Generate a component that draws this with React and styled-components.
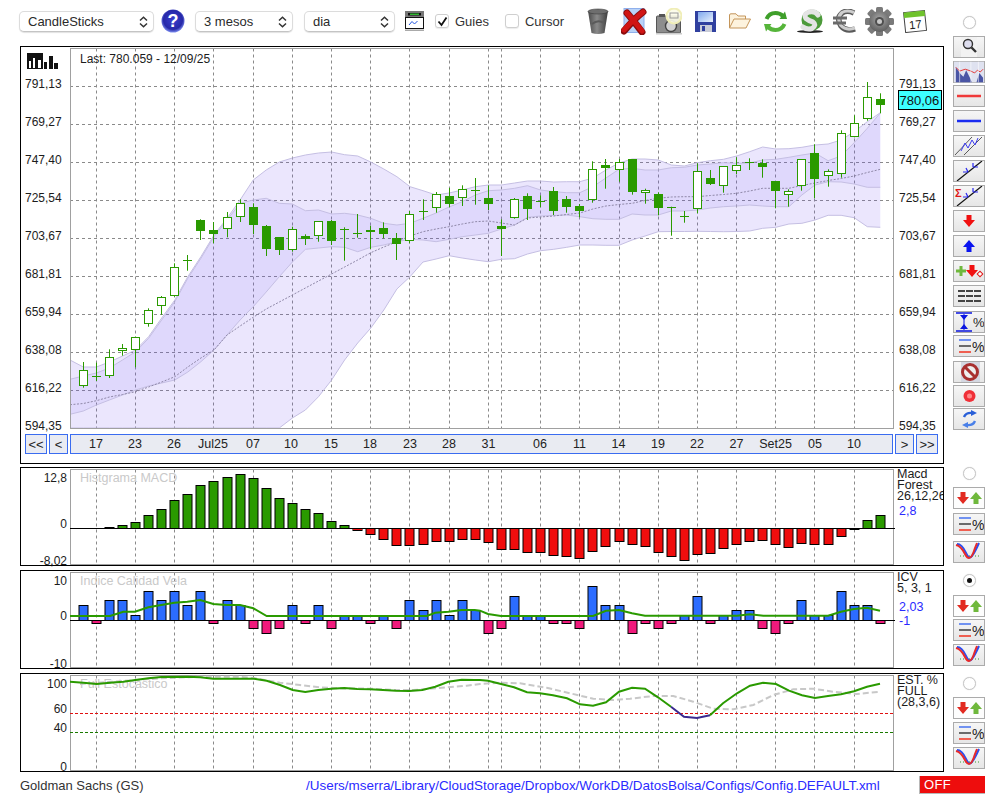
import React from "react";
import styled, { createGlobalStyle } from "styled-components";

const GlobalStyle = createGlobalStyle`
  html, body { margin: 0; padding: 0; background: #fff; }
  body { font-family: "Liberation Sans", Arial, sans-serif; color: #222; }
`;

// candles: [wickTop, wickBottom, bodyTop, bodyBottom, hollow]
const candles = [
  [362, 387.7, 370.3, 385.7, 1], [362.7, 381, 376.7, 376.7, 0], [349.3, 378, 357.3, 375.7, 1], [344, 355.7, 348.3, 350.7, 1],
  [336.7, 367.3, 337.3, 349.7, 1], [308.3, 326.7, 310.3, 323.7, 1], [296, 314.7, 297.3, 305.7, 1], [263.3, 296.7, 267.3, 295.7, 1],
  [255, 270.7, 260.3, 260.3, 0], [219.3, 240, 220.3, 230.7, 0], [222, 243.3, 230, 232.7, 0], [212, 237.3, 217.3, 228.3, 1],
  [199.3, 222, 203.3, 216.3, 1], [203.3, 234, 207.3, 224.7, 0], [225, 256, 226.3, 248.7, 0], [237.3, 255, 237.3, 249.7, 0],
  [226.7, 251.7, 229.3, 249.3, 1], [234.3, 245, 236, 237.7, 0], [221.3, 241.7, 221.7, 235.3, 1], [220, 245, 221, 239.7, 0],
  [227.3, 260.7, 229.3, 229.3, 0], [214, 237.7, 233.3, 233.3, 0], [225.7, 249, 230.3, 231.7, 0], [222.3, 238.3, 228.3, 233.7, 0],
  [233, 260, 238.3, 243.7, 0], [211, 243.3, 214.3, 240.3, 1], [199.3, 220, 211.3, 211.3, 0], [192, 212.7, 194.3, 207.3, 1],
  [188, 207.3, 196, 202.7, 0], [185.3, 206, 189.3, 197.3, 1], [178, 204.7, 190.7, 190.7, 0], [185.3, 210, 198, 202.7, 0],
  [219.3, 256, 226, 227.7, 0], [198, 218.7, 199.3, 217.7, 1], [193.3, 220, 196, 207.7, 0], [195.3, 207.3, 201.3, 201.3, 0],
  [187, 215, 191, 210, 0], [196, 212.7, 199.3, 206.7, 0], [204, 217.3, 206.3, 210.7, 0], [161.3, 202.7, 169.7, 199.3, 1],
  [159, 188.7, 165, 166.7, 0], [159, 181.7, 162.3, 169.3, 1], [159, 194.7, 159, 190.7, 0], [188.7, 203.7, 190.3, 192.3, 1],
  [192.3, 215.3, 194.3, 207, 0], [206.7, 235.7, 207, 207, 0], [211, 222.7, 216.3, 216.3, 0], [163.3, 213.3, 171.3, 208.3, 1],
  [170, 185, 178.3, 183.7, 0], [166.3, 192.7, 166.3, 185.3, 1], [157.3, 174, 165.3, 170.3, 1], [158.3, 170, 162.3, 162.3, 0],
  [159.3, 177.7, 163, 165.7, 0], [181.3, 208.3, 181.3, 190.7, 0], [189.3, 206.7, 191.3, 194.3, 1], [159, 190.7, 159.3, 185.3, 1],
  [144.3, 198.3, 153, 177.7, 0], [169.3, 186.7, 171.3, 175.3, 1], [130.3, 177.7, 133.3, 173.7, 1], [115.3, 137.3, 123.3, 136.3, 1],
  [82, 120.7, 97.3, 118.3, 1], [93.3, 113.3, 99.3, 104.7, 0],
];

const outerUpper = [367, 367, 362, 356, 350, 336.7, 318, 300, 276.7, 256.7, 235, 218.3, 200, 180, 170, 162, 158, 155, 153, 152, 154.7, 156, 162, 169, 176.7, 186.7, 190.7, 195, 193, 190, 186.7, 185, 185, 183, 181, 181, 182, 181.7, 181.7, 178, 170, 163, 159, 159, 160, 165, 166, 162.7, 160.7, 159.3, 156, 151.7, 147, 149, 148.7, 147.3, 145, 144, 140, 131.7, 121.7, 112.7];
const innerUpper = [376, 373, 368, 360, 351.7, 338.3, 320, 301.7, 278.3, 258.3, 236.7, 220, 203.3, 200, 198.3, 203.3, 204, 210.7, 210, 214, 213.3, 215, 218.3, 223.3, 225, 223.3, 218.3, 213, 207, 201.7, 195, 190.7, 190, 188.3, 185.7, 190, 191.7, 192.7, 192.7, 186.7, 178, 169.3, 168.3, 170, 170, 167.7, 167.3, 165, 164, 162.7, 163.3, 163, 160, 159.3, 157.3, 155, 153, 160.7, 156, 142.7, 128.3, 113];
const innerLower = [411, 405, 400, 395, 390, 386, 383, 380, 372, 361.7, 350, 335, 320, 306.7, 292, 276.7, 262, 249.3, 248, 246.7, 247.3, 251.7, 247.3, 245, 241.7, 239.3, 240, 241.7, 239.3, 236.7, 235, 233.3, 229, 225, 217.3, 216, 215.5, 215, 216.7, 218.7, 219.3, 219.3, 214, 215, 215, 211, 211, 210, 208, 206.7, 206, 205, 206, 206.7, 206.7, 195, 185, 181.7, 182, 184, 187.3, 187.3];
const outerLower = [428, 428, 428, 428, 428, 428, 428, 428, 428, 428, 428, 428, 428, 428, 428, 428, 418, 410, 396.7, 380, 360, 343, 328, 310, 289, 276.7, 262, 259, 255.7, 258, 260, 261.7, 259.3, 258.7, 254, 250.7, 249.3, 247.3, 245, 245, 245.3, 245.3, 240, 236, 231.7, 231.5, 231.5, 231.3, 231.5, 231.7, 231.5, 231, 228.3, 227.3, 224, 223.3, 220, 215.3, 215.3, 217.7, 226.7, 227.3];
const movingAvg = [403.5, 400.7, 397, 394.5, 391.7, 387, 382, 376.7, 367, 358, 350, 335, 326, 317.3, 309, 302, 295, 288, 281, 274, 267, 260, 252.7, 247, 241.7, 236, 231.7, 229, 226.7, 224, 221.7, 221, 223, 225, 218, 217, 216, 214.5, 213, 209, 206, 204.5, 203.3, 200.5, 198.3, 197, 196.7, 196.7, 195.5, 194.5, 193.3, 191, 188.3, 188.3, 188.3, 185.5, 183, 180.5, 178.5, 176, 172.5, 169.3];

// macd bar ends and icv bar ends, read at 3x from the reference
const macdEnds = [205, 205, 202, 196, 187, 166, 148, 121, 103, 76, 64, 52, 43, 55, 85, 115, 130, 148, 160, 184, 196, 212, 223, 238, 257, 257, 254, 245, 245, 238, 238, 247, 269, 269, 277, 277, 286, 290, 296, 274, 260, 245, 254, 260, 277, 290, 301, 283, 281, 265, 254, 245, 241, 254, 263, 251, 254, 254, 230, 207, 181, 166];
const icvEnds = [437, 490, 421, 421, 466, 394, 421, 394, 437, 394, 490, 421, 436, 505, 521, 505, 436, 490, 436, 505, 466, 466, 490, 466, 505, 421, 451, 421, 466, 421, 451, 521, 505, 409, 466, 466, 490, 490, 505, 379, 436, 436, 521, 490, 505, 490, 466, 409, 490, 466, 451, 451, 505, 521, 490, 421, 466, 466, 394, 436, 436, 490];

const traced = (left, right) => [
  ...left.map(([x, y]) => [x / 3, 460 + y / 3]),
  ...right.map(([x, y]) => [480 + x / 3, 460 + y / 3]),
];

const icvLine = traced(
  [[210, 468], [330, 468], [370, 455], [405, 455], [445, 442], [484, 435], [523, 428], [562, 425], [601, 420], [640, 432], [679, 435], [720, 435], [760, 445], [800, 468], [1280, 468], [1306, 458], [1345, 455], [1385, 450], [1424, 450]],
  [[0, 452], [24, 462], [63, 468], [339, 468], [378, 452], [417, 450], [456, 460], [495, 467], [771, 467], [810, 463], [850, 467], [1044, 467], [1083, 455], [1122, 447], [1161, 443], [1200, 452]]
);
const estGreen = traced(
  [[210, 665], [250, 668], [290, 672], [330, 668], [370, 665], [406, 660], [445, 655], [484, 651], [562, 650], [601, 652], [640, 656], [760, 656], [800, 662], [840, 675], [878, 690], [916, 696], [955, 690], [994, 686], [1033, 684], [1072, 687], [1110, 688], [1149, 690], [1188, 692], [1228, 693], [1267, 690], [1306, 680], [1345, 665], [1385, 659], [1424, 660]],
  [[0, 660], [24, 662], [63, 672], [102, 682], [141, 697], [180, 700], [219, 706], [261, 715], [300, 733], [339, 737], [378, 727], [417, 695], [456, 683], [495, 686], [534, 712], [573, 740]]
);
const estGreenEnd = traced([], [[690, 766], [729, 730], [771, 700], [810, 677], [849, 668], [888, 672], [927, 692], [966, 706], [1005, 714], [1044, 708], [1083, 703], [1122, 694], [1161, 680], [1200, 671]]);
const estPurple = traced([], [[573, 740], [612, 770], [651, 774], [690, 766]]);
const estGray = traced(
  [[240, 672], [480, 655], [560, 652], [600, 650], [720, 650], [760, 654], [840, 668], [900, 675], [960, 682], [1020, 685], [1110, 686], [1180, 690], [1240, 690], [1310, 685], [1400, 677]],
  [[0, 672], [60, 668], [120, 670], [200, 683], [270, 700], [340, 716], [400, 720], [450, 716], [520, 708], [580, 708], [640, 725], [700, 746], [760, 748], [820, 735], [880, 705], [940, 688], [1000, 686], [1060, 695], [1130, 702], [1200, 695]]
);

const GRID_INDEX = [1, 4, 7, 10, 13, 16, 19, 22, 25, 28, 31, 32, 35, 38, 41, 44, 47, 50, 53, 56, 59];
const PRICES = ["791,13", "769,27", "747,40", "725,54", "703,67", "681,81", "659,94", "638,08", "616,22", "594,35"];
const TICKS = [
  ["17", 96], ["23", 135], ["26", 174], ["Jul25", 213], ["07", 253], ["10", 291], ["15", 331], ["18", 370], ["23", 410], ["28", 449],
  ["31", 488.5], ["06", 540], ["11", 579.5], ["14", 618.5], ["19", 658], ["22", 697], ["27", 736.5], ["Set25", 775.5], ["05", 815], ["10", 854],
];

const snap = v => Math.floor(v) + 0.5;
const cx = i => 83.3 + 13.066 * i;
const toPoints = list => list.map(([x, y]) => `${x.toFixed(1)},${y.toFixed(1)}`).join(" ");
const series = (start, values) => [[70, start], ...values.map((y, i) => [cx(i), y])];

const GREEN = "#2a9a00";

const Page = styled.div`
  width: 1000px;
  height: 800px;
  overflow: hidden;
`;

const Workspace = styled.div`
  display: flex;
  height: 772px;
`;

const LeftColumn = styled.div`
  width: 924px;
  margin-left: 20px;
`;

const Toolbar = styled.div`
  display: flex;
  align-items: center;
  height: 42px;
  margin: 0 0 4px -1px;
`;

const SelectBox = styled.label`
  position: relative;
  display: block;
  flex: none;
  width: ${p => p.$width}px;
  height: 21px;
  margin-left: ${p => p.$ml || 0}px;
`;

const Select = styled.select`
  appearance: none;
  width: 100%;
  height: 100%;
  padding: 0 0 0 8px;
  border: 1px solid #dcdcdc;
  border-bottom-color: #c4c4c4;
  border-radius: 5px;
  background: #fff;
  box-shadow: 0 1px 1px rgba(0, 0, 0, 0.12);
  font: 13px "Liberation Sans", Arial, sans-serif;
  color: #2a2a2a;
`;

const SelectChevron = styled.svg`
  position: absolute;
  top: 5px;
  right: 6px;
  pointer-events: none;
`;

const ToolIcon = styled.svg`
  display: block;
  flex: none;
  margin-left: ${p => p.$ml || 0}px;
`;

const CheckBox = styled.span`
  box-sizing: border-box;
  display: flex;
  align-items: center;
  justify-content: center;
  flex: none;
  width: 14px;
  height: 14px;
  margin-left: ${p => p.$ml}px;
  border: 1px solid #cfcfcf;
  border-radius: 3px;
  background: #fff;
  box-shadow: 0 1px 1px rgba(0, 0, 0, 0.08);
`;

const CheckLabel = styled.span`
  margin-left: 6px;
  font-size: 13px;
  color: #333;
`;

const ChartPanel = styled.section`
  box-sizing: border-box;
  display: flex;
  height: ${p => p.$height}px;
  margin-bottom: ${p => p.$gap}px;
  border: 1px solid #000;
`;

const MainPanel = styled.section`
  box-sizing: border-box;
  height: 418px;
  margin-bottom: 3px;
  border: 1px solid #000;
`;

const ChartSvg = styled.svg`
  display: block;
  flex: none;
  overflow: visible;
`;

const AxisText = styled.text`
  font: 12px "Liberation Sans", Arial, sans-serif;
  fill: #1c1c1c;
`;

const WatermarkText = styled.text`
  font: 12.5px "Liberation Sans", Arial, sans-serif;
  fill: #c9c9c9;
`;

const PriceBox = styled.rect`
  fill: #3dffff;
  stroke: #000;
`;

const PriceText = styled.text`
  font: 13px "Liberation Sans", Arial, sans-serif;
  fill: #111;
`;

const NavRow = styled.nav`
  display: flex;
  gap: 2px;
  height: 20px;
  margin: 2px 0 0 4px;
`;

const NavButton = styled.button`
  box-sizing: border-box;
  flex: none;
  width: ${p => p.$width}px;
  padding: 0;
  border: 1px solid #3a6cf0;
  background: #e9ebf2;
  font: 13px "Liberation Sans", Arial, sans-serif;
  color: #222;
`;

const TickStrip = styled.div`
  position: relative;
  box-sizing: border-box;
  flex: none;
  width: 823px;
  border: 1px solid #3a6cf0;
  background: #e9ebf2;
`;

const Tick = styled.span`
  position: absolute;
  top: 2px;
  transform: translateX(-50%);
  font-size: 12.5px;
  color: #222;
`;

const Legend = styled.div`
  flex: 1;
  min-width: 0;
  padding: 1px 0 0 1px;
  overflow: hidden;
  font-size: 12.5px;
  line-height: 11px;
  color: #1c1c1c;
  white-space: nowrap;
`;

const LegendValue = styled.div`
  margin: ${p => p.$mt}px 0 0 2px;
  line-height: 14px;
  color: #2a2aff;
`;

const Rail = styled.aside`
  display: flex;
  flex-direction: column;
  align-items: center;
  width: 32px;
  margin-left: 9px;
`;

const RadioDot = styled.span`
  box-sizing: border-box;
  display: flex;
  align-items: center;
  justify-content: center;
  flex: none;
  width: 13px;
  height: 13px;
  margin-top: ${p => p.$mt}px;
  border: 1px solid #c8c8c8;
  border-radius: 50%;
  background: #fff;
  box-shadow: 0 0 1px rgba(0, 0, 0, 0.2);

  &::after {
    content: "";
    display: ${p => (p.$on ? "block" : "none")};
    width: 5px;
    height: 5px;
    border-radius: 50%;
    background: #111;
  }
`;

const RailButton = styled.button`
  box-sizing: border-box;
  display: flex;
  align-items: center;
  justify-content: center;
  flex: none;
  width: 32px;
  height: 22px;
  margin-top: ${p => p.$mt}px;
  padding: 0;
  border: 1px solid #ababab;
  background: ${p => (p.$plain ? "#fdfdfd" : "linear-gradient(#f6f6f6, #e6e6e6)")};
`;

const StatusBar = styled.footer`
  display: flex;
  align-items: center;
  height: 20px;
  margin-top: 3px;
  padding-left: 20px;
  font-size: 13px;
`;

const StockName = styled.span`
  color: #333;
  flex: none;
  width: 286px;
`;

const ConfigPath = styled.span`
  color: #2a2aff;
  flex: none;
  width: 613px;
  font-size: 13.45px;
  white-space: nowrap;
`;

const OffBadge = styled.span`
  box-sizing: border-box;
  flex: none;
  width: 66px;
  height: 18px;
  padding: 1px 0 0 4px;
  border: 1px solid #b8b8b8;
  border-width: 0 0 1px 1px;
  background: #ee0d0d;
  font-size: 13px;
  letter-spacing: 0.3px;
  color: #fff;
`;

const Chevrons = () => (
  <SelectChevron width="9" height="12" viewBox="0 0 9 12" fill="none" stroke="#333" strokeWidth="1.5">
    <path d="M1 4.5 L4.5 1.2 L8 4.5" />
    <path d="M1 7.5 L4.5 10.8 L8 7.5" />
  </SelectChevron>
);

const Dropdown = ({ width, ml, value }) => (
  <SelectBox $width={width} $ml={ml}>
    <Select defaultValue={value}>
      <option>{value}</option>
    </Select>
    <Chevrons />
  </SelectBox>
);

const HelpIcon = () => (
  <ToolIcon $ml={7} width="24" height="24" viewBox="0 0 24 24">
    <defs>
      <radialGradient id="helpBlue" cx="50%" cy="45%" r="55%">
        <stop offset="0" stopColor="#3a3fd0" />
        <stop offset="0.75" stopColor="#2628a8" />
        <stop offset="1" stopColor="#7d8ef0" />
      </radialGradient>
    </defs>
    <circle cx="12" cy="12" r="11.5" fill="url(#helpBlue)" />
    <text x="12" y="18" textAnchor="middle" fontFamily="Liberation Sans" fontWeight="700" fontSize="18" fill="#fff">?</text>
  </ToolIcon>
);

const ChartWindowIcon = () => (
  <ToolIcon $ml={10} width="19" height="20" viewBox="0 0 19 20">
    <rect x="0" y="0" width="19" height="6" fill="#777" />
    <rect x="3" y="2" width="13" height="2.5" fill="#111" />
    <rect x="5" y="2.5" width="9" height="1.5" fill="#2fb52f" />
    <rect x="0.5" y="6.5" width="18" height="11" fill="#fff" stroke="#111" />
    <path d="M4 14 L7 10.5 L9.5 13 L12.5 10" fill="none" stroke="#2255e0" />
    <rect x="0" y="18.5" width="19" height="1.5" fill="#aaa" />
  </ToolIcon>
);

const TrashIcon = () => (
  <ToolIcon $ml={23} width="22" height="27" viewBox="0 0 22 27">
    <defs>
      <linearGradient id="trashBody" x1="0" x2="1" y1="0" y2="0">
        <stop offset="0" stopColor="#4a4a4a" />
        <stop offset="0.45" stopColor="#8a8a8a" />
        <stop offset="1" stopColor="#3d3d3d" />
      </linearGradient>
    </defs>
    <path d="M1 3 L21 3 L17.5 25 Q11 27 4.5 25 Z" fill="url(#trashBody)" />
    <ellipse cx="11" cy="3.5" rx="10" ry="2.5" fill="#6e6e6e" stroke="#3a3a3a" strokeWidth="0.6" />
    <path d="M5 16 Q11 11 17 15" fill="none" stroke="#5a5a5a" strokeWidth="2" />
  </ToolIcon>
);

const DeleteIcon = () => (
  <ToolIcon $ml={12} width="26" height="27" viewBox="0 0 26 27">
    <rect x="3" y="0.5" width="20" height="24" fill="#b9d2f7" stroke="#8fb0ec" />
    <path d="M6 5 Q12 12 21 24 M22 4 Q14 10 3 23" fill="none" stroke="#8a0d0d" strokeWidth="7" strokeLinecap="round" />
    <path d="M6 5 Q12 12 21 23 M22 4 Q14 10 3 22" fill="none" stroke="#d01515" strokeWidth="5" strokeLinecap="round" />
  </ToolIcon>
);

const CameraIcon = () => (
  <ToolIcon $ml={9} width="26" height="27" viewBox="0 0 26 27">
    <rect x="0.5" y="8" width="24" height="17" rx="1" fill="#8d8d8d" stroke="#555" />
    <rect x="3" y="6" width="6" height="3" fill="#555" />
    <rect x="0" y="25" width="26" height="1.5" fill="#ccc" />
    <circle cx="15" cy="18" r="5.5" fill="#d2d2d2" stroke="#444" strokeWidth="1.4" />
    <circle cx="18" cy="8" r="7.5" fill="#fbfbe8" fillOpacity="0.9" stroke="#f0eeb8" strokeWidth="2" />
    <rect x="14" y="5" width="8" height="5" fill="none" stroke="#999" />
  </ToolIcon>
);

const FloppyIcon = () => (
  <ToolIcon $ml={13} width="21" height="21" viewBox="0 0 21 21">
    <defs>
      <linearGradient id="floppyLabel" x1="0" x2="1" y1="0" y2="1">
        <stop offset="0" stopColor="#7fa8ee" />
        <stop offset="1" stopColor="#e8f0fc" />
      </linearGradient>
    </defs>
    <rect x="0" y="0" width="21" height="21" fill="#30409f" />
    <rect x="3" y="1" width="15" height="10" fill="url(#floppyLabel)" />
    <rect x="5" y="14" width="12" height="7" fill="#c9ccd8" />
    <rect x="7" y="15" width="3" height="5" fill="#30409f" />
  </ToolIcon>
);

const FolderIcon = () => (
  <ToolIcon $ml={13} width="22" height="16" viewBox="0 0 22 16" fill="#fdf3de" stroke="#c4955a">
    <path d="M0.5 15 L0.5 2 Q0.5 0.8 2 0.8 L7 0.8 L9 3 L16.5 3 L16.5 6" />
    <path d="M0.5 15 L5 6 L21.5 6 L17 15 Z" />
  </ToolIcon>
);

const RefreshIcon = () => (
  <ToolIcon $ml={13} width="23" height="23" viewBox="0 0 23 23" fill="none">
    <path d="M2.5 9 Q5 3 11.5 3 Q16 3 19 6" stroke="#3f9f2a" strokeWidth="4" />
    <path d="M15.5 9 L23 9 L21 1.5 Z" fill="#3f9f2a" />
    <path d="M20.5 14 Q18 20 11.5 20 Q7 20 4 17" stroke="#56b53a" strokeWidth="4" />
    <path d="M7.5 14 L0 14 L2 21.5 Z" fill="#56b53a" />
  </ToolIcon>
);

const DollarIcon = () => (
  <ToolIcon $ml={10} width="27" height="24" viewBox="0 0 27 24" fill="none">
    <ellipse cx="13" cy="22.5" rx="13" ry="1.5" fill="#222" />
    <circle cx="15" cy="11" r="10.5" fill="#4c9a3a" />
    <path d="M21 6 Q18 1.5 12 3 Q6 5 9 9.5 Q12 12 16 13 Q20 16 15 19.5 Q10 21 6 18" stroke="#e4e4e4" strokeWidth="5" strokeLinecap="round" />
  </ToolIcon>
);

const EuroIcon = () => (
  <ToolIcon $ml={8} width="26" height="24" viewBox="0 0 26 24" fill="none">
    <path d="M22 4 Q15 0.5 10 4 Q4 9 9 17 Q14 23 23 20" stroke="#5a5a5a" strokeWidth="5.5" />
    <path d="M22 3.5 Q15 0.5 10 3.5 Q4 9 9 16.5 Q14 22 23 19" stroke="#cdcdcd" strokeWidth="3.2" />
    <path d="M1 9 L15 9 M1 14 L14 14" stroke="#6a6a6a" strokeWidth="3" />
  </ToolIcon>
);

const GearIcon = () => (
  <ToolIcon $ml={7} width="29" height="29" viewBox="0 0 29 29">
    <defs>
      <radialGradient id="gearBody" cx="50%" cy="40%" r="60%">
        <stop offset="0" stopColor="#a8a8a8" />
        <stop offset="1" stopColor="#5f5f5f" />
      </radialGradient>
    </defs>
    {[0, 45, 90, 135, 180, 225, 270, 315].map(a => (
      <rect key={a} x="11" y="0" width="7" height="8" rx="1.5" fill="#7a7a7a" transform={`rotate(${a} 14.5 14.5)`} />
    ))}
    <circle cx="14.5" cy="14.5" r="10.5" fill="url(#gearBody)" />
    <circle cx="14.5" cy="14.5" r="4.5" fill="#4e4e4e" />
    <circle cx="14.5" cy="14.5" r="2.5" fill="#c8c8c8" />
  </ToolIcon>
);

const CalendarIcon = () => (
  <ToolIcon $ml={9} width="24" height="24" viewBox="0 0 24 24">
    <g transform="rotate(-6 12 12)">
      <rect x="1.5" y="2.5" width="21" height="20" fill="#fff" stroke="#444" />
      <rect x="1.5" y="2.5" width="21" height="5.5" fill="#6fc22c" />
      <text x="12" y="19.5" textAnchor="middle" fontFamily="Liberation Sans" fontSize="11.5" fill="#222">17</text>
    </g>
  </ToolIcon>
);

const Glyph = ({ children }) => (
  <svg width="30" height="20" viewBox="0 0 30 20" fill="none">
    {children}
  </svg>
);

const DownArrow = ({ x = 15, color = "#f01010" }) => (
  <path d={`M${x - 2.5} 4 h5 v5 h3.5 l-6 7 l-6 -7 h3.5 z`} fill={color} />
);

const UpArrow = ({ x = 15, color = "#0a14f0" }) => (
  <path d={`M${x - 2.5} 16 h5 v-5 h3.5 l-6 -7 l-6 7 h3.5 z`} fill={color} />
);

const PercentMark = () => (
  <text x="18" y="16" fontFamily="Liberation Sans" fontSize="14" fill="#222">%</text>
);

const SearchGlyph = () => (
  <Glyph>
    <rect x="7" y="0" width="16" height="20" fill="#f2f2f2" />
    <circle cx="14" cy="7" r="4.5" fill="#dde" stroke="#333" strokeWidth="1.4" />
    <path d="M17.5 10.5 L22 15" stroke="#333" strokeWidth="2.4" />
  </Glyph>
);

const BandsButton = () => (
  <svg width="32" height="22" viewBox="0 0 32 22" fill="none">
    <rect width="32" height="22" fill="#dfe2f0" />
    <path d="M2 22 L2 6 L7 13 L10 16 L13 9 L17 17 L19 22 L24 22 L27 12 L31 17 L31 22 Z" fill="#4a55a5" />
    <path d="M2 6 L6 10 L12 8 L18 10 L22 12 L25 9 L28 11 L31 8" stroke="#e23030" />
    <path d="M6 0 V22 M18 0 V22 M26 0 V22" stroke="#fff" strokeOpacity="0.6" />
  </svg>
);

const ChannelGlyph = () => (
  <Glyph>
    <path d="M1 19 L18 1 M10 19 L28 1" stroke="#333" strokeWidth="0.8" />
    <path d="M7 15 L11 7 L14 12 L18 4 L21 9 L24 2" stroke="#3a3af0" />
  </Glyph>
);

const SplitGlyph = ({ sigma }) => (
  <Glyph>
    <path d="M3 20 L28 0" stroke="#111" strokeWidth="1.2" />
    <path d="M14 11 L9 11 M14 11 L12 7 M19 6 L24 6 M19 6 L19 2" stroke="#2a2af0" strokeWidth="1.2" />
    {sigma && <text x="1" y="11" fontFamily="Liberation Sans" fontWeight="700" fontSize="11" fill="#e01818">Σ</text>}
  </Glyph>
);

const MixGlyph = () => (
  <Glyph>
    <path d="M7 5 V15 M2 10 H12" stroke="#6fb83c" strokeWidth="3" />
    <DownArrow x={18} />
    <rect x="24" y="11" width="4" height="4" transform="rotate(45 26 13)" stroke="#e01818" fill="#fff" />
  </Glyph>
);

const DashRowsGlyph = () => (
  <Glyph>
    {[5, 10, 15].map(y => (
      <path key={y} d={`M4 ${y} H11 M12 ${y} H19 M20 ${y} H27`} stroke="#444" strokeWidth="1.8" />
    ))}
  </Glyph>
);

const SpanPercentGlyph = () => (
  <Glyph>
    <path d="M2 1 H18 M2 19 H18" stroke="#0a14e0" strokeWidth="1.4" />
    <path d="M10 2 V18" stroke="#0a14e0" />
    <path d="M6 3 H14 L10 8 Z M6 17 H14 L10 12 Z" fill="#0a14e0" />
    <text x="19" y="15" fontFamily="Liberation Sans" fontSize="13" fill="#222">%</text>
  </Glyph>
);

const LevelsGlyph = () => (
  <Glyph>
    <path d="M5 4 H17" stroke="#2a5ef0" strokeWidth="1.3" />
    <path d="M5 10 H17" stroke="#222" strokeWidth="1.3" />
    <path d="M5 16 H17" stroke="#f05040" strokeWidth="1.8" />
    <PercentMark />
  </Glyph>
);

const StopGlyph = () => (
  <Glyph>
    <rect x="7" y="0" width="19" height="20" fill="#d4d8e2" />
    <circle cx="16" cy="10" r="7.5" fill="#eee" stroke="#a83030" strokeWidth="3" />
    <path d="M11 5 L21 15" stroke="#a83030" strokeWidth="3" />
  </Glyph>
);

const RecordGlyph = () => (
  <Glyph>
    <circle cx="15.5" cy="10" r="6" fill="#f03038" />
    <circle cx="15.5" cy="10" r="2.5" fill="#f88" />
  </Glyph>
);

const SyncGlyph = () => (
  <Glyph>
    <path d="M10 8 Q12 3 19 4" stroke="#2a60d8" strokeWidth="2.4" />
    <path d="M17 1 L23 4 L17 7 Z" fill="#2a60d8" />
    <path d="M21 12 Q19 17 12 16" stroke="#4a80e8" strokeWidth="2.4" />
    <path d="M14 13 L8 16 L14 19 Z" fill="#4a80e8" />
  </Glyph>
);

const LineGlyph = ({ color }) => (
  <Glyph>
    <path d="M3 10 H27" stroke={color} strokeOpacity="0.25" strokeWidth="4" />
    <path d="M3 10 H27" stroke={color} strokeWidth="2" />
  </Glyph>
);

const PairGlyph = () => (
  <Glyph>
    <DownArrow x={9} color="#e22a20" />
    <UpArrow x={22} color="#6fb83c" />
  </Glyph>
);

const CurveGlyph = () => (
  <Glyph>
    <path d="M6 14 H27" stroke="#3a9a30" strokeDasharray="1 2" />
    <path d="M3 2 Q8 2 12 11 Q15 18 18 14 Q21 10 25 1" stroke="#2a4ef0" strokeWidth="2" />
    <path d="M2 3 Q7 4 11 12 Q13 16 15 16 Q18 16 21 6 L23 1" stroke="#e82a2a" strokeWidth="2" />
  </Glyph>
);

const railTop = [
  { mt: 7, glyph: <SearchGlyph /> },
  { mt: 3, glyph: <BandsButton /> },
  { mt: 2, glyph: <LineGlyph color="#f03a3a" /> },
  { mt: 3, glyph: <LineGlyph color="#1a2cf0" /> },
  { mt: 3, glyph: <ChannelGlyph /> },
  { mt: 3, glyph: <SplitGlyph /> },
  { mt: 3, glyph: <SplitGlyph sigma /> },
  { mt: 3, glyph: <Glyph><DownArrow /></Glyph> },
  { mt: 3, glyph: <Glyph><UpArrow /></Glyph> },
  { mt: 3, glyph: <MixGlyph /> },
  { mt: 3, glyph: <DashRowsGlyph /> },
  { mt: 4, glyph: <SpanPercentGlyph /> },
  { mt: 2, glyph: <LevelsGlyph /> },
  { mt: 4, glyph: <StopGlyph /> },
  { mt: 2, glyph: <RecordGlyph /> },
  { mt: 1, glyph: <SyncGlyph /> },
];

const IndicatorRail = ({ radioMt, on, gaps }) => (
  <>
    <RadioDot $mt={radioMt} $on={on} />
    <RailButton $mt={gaps[0]} $plain><PairGlyph /></RailButton>
    <RailButton $mt={gaps[1]}><LevelsGlyph /></RailButton>
    <RailButton $mt={gaps[2]}><CurveGlyph /></RailButton>
  </>
);

const GridLines = ({ top, bottom, hLines = [] }) => (
  <g stroke="#8a8a8a" strokeDasharray="3 3">
    {GRID_INDEX.map(i => (
      <line key={i} x1={snap(cx(i))} x2={snap(cx(i))} y1={top} y2={bottom} />
    ))}
    {hLines.map(y => (
      <line key={y} x1="70" x2="893" y1={y} y2={y} />
    ))}
  </g>
);

const Candle = ({ i, data }) => {
  const [wickTop, wickBottom, bodyTop, bodyBottom, hollow] = data;
  const x = snap(cx(i));
  const top = snap(bodyTop);
  const isDoji = bodyTop === bodyBottom;
  return (
    <g>
      <line x1={x} x2={x} y1={wickTop} y2={wickBottom} stroke={GREEN} />
      {isDoji ? (
        <line x1={x - 4.5} x2={x + 4.5} y1={top} y2={top} stroke={GREEN} />
      ) : (
        <rect
          x={x - 4}
          y={top}
          width="8"
          height={Math.max(1, Math.round(bodyBottom - bodyTop))}
          fill={hollow ? "#fff" : GREEN}
          stroke={GREEN}
        />
      )}
    </g>
  );
};

const PriceChart = () => {
  const outer = [...series(360, outerUpper), ...series(428, outerLower).reverse()];
  const inner = [...series(379.3, innerUpper), ...series(414.3, innerLower).reverse()];
  const hLines = PRICES.slice(0, 9).map((_, k) => 86.5 + 38 * k);
  return (
    <ChartSvg width="922" height="385" viewBox="21 47 922 385">
      <GridLines top={48.5} bottom={428.5} hLines={hLines} />
      <polygon points={toPoints(outer)} fill="rgb(110,80,240)" fillOpacity="0.14" />
      <polygon points={toPoints(inner)} fill="rgb(110,80,240)" fillOpacity="0.09" />
      <g fill="none" stroke="#c5bfe3">
        <polyline points={toPoints(series(360, outerUpper))} />
        <polyline points={toPoints(series(428, outerLower))} />
        <polyline points={toPoints(series(379.3, innerUpper))} />
        <polyline points={toPoints(series(414.3, innerLower))} />
      </g>
      <polyline points={toPoints(series(404.7, movingAvg))} fill="none" stroke="#8f88a8" strokeDasharray="2 1.5" />
      <rect x="70.5" y="48.5" width="823" height="380" fill="none" stroke="#a0a0a0" />
      {candles.map((c, i) => (
        <Candle key={i} i={i} data={c} />
      ))}
      <path d="M27 53 H43 V69 H27 Z" fill="#111" />
      <path d="M29 61 H31 V68 H29 Z M33 58 H35 V68 H33 Z M38 60 H41 V68 H38 Z" fill="#fff" />
      <path d="M44 62 H47 V69 H44 Z M49 56 H53 V69 H49 Z M54 63 H58 V69 H54 Z" fill="#111" />
      <AxisText x="80" y="63">Last: 780.059 - 12/09/25</AxisText>
      {PRICES.map((p, k) => (
        <g key={p}>
          <AxisText x="25" y={88 + 38 * k}>{p}</AxisText>
          <AxisText x="899" y={88 + 38 * k}>{p}</AxisText>
        </g>
      ))}
      <PriceBox x="898.5" y="90.5" width="43" height="19" />
      <PriceText x="899.5" y="105">780,06</PriceText>
    </ChartSvg>
  );
};

const SubChart = ({ top, title, labels, children }) => (
  <ChartSvg width="875" height="97" viewBox={`21 ${top + 1} 875 97`}>
    <GridLines top={top + 2.5} bottom={top + 97.5} />
    <rect x="70.5" y={top + 2.5} width="823" height="95" fill="none" stroke="#a0a0a0" />
    <WatermarkText x="80" y={title.y}>{title.text}</WatermarkText>
    {labels.map(([text, y]) => (
      <AxisText key={text} x="67" y={y} textAnchor="end">{text}</AxisText>
    ))}
    {children}
  </ChartSvg>
);

const MacdBars = () => (
  <g stroke="#000">
    {macdEnds.map((end, i) => {
      const top = snap(460 + Math.min(end, 205) / 3);
      const height = Math.round(Math.abs(end - 205) / 3);
      if (height === 0) return null;
      return (
        <rect key={i} x={snap(cx(i)) - 4.5} y={top} width="9" height={height} fill={end < 205 ? GREEN : "#f00d0d"} />
      );
    })}
    <line x1="70" x2="895" y1="528.5" y2="528.5" />
  </g>
);

const IcvBars = () => (
  <g stroke="#000">
    {icvEnds.map((end, i) => (
      <rect
        key={i}
        x={snap(cx(i)) - 4.5}
        y={snap(460 + Math.min(end, 481) / 3)}
        width="9"
        height={Math.round(Math.abs(end - 481) / 3)}
        fill={end < 481 ? "#2c6cff" : "#f01a7c"}
      />
    ))}
    <line x1="70" x2="895" y1="620.5" y2="620.5" />
  </g>
);

const App = () => (
  <Page>
    <GlobalStyle />
    <Workspace>
      <LeftColumn>
        <Toolbar>
          <Dropdown width={135} value="CandleSticks" />
          <HelpIcon />
          <Dropdown width={98} ml={10} value="3 mesos" />
          <Dropdown width={91} ml={11} value="dia" />
          <ChartWindowIcon />
          <CheckBox $ml={11}>
            <svg width="11" height="11" viewBox="0 0 11 11" fill="none" stroke="#111" strokeWidth="1.8">
              <path d="M1.5 5.5 L4.5 9 L9.5 1.5" />
            </svg>
          </CheckBox>
          <CheckLabel>Guies</CheckLabel>
          <CheckBox $ml={16} />
          <CheckLabel>Cursor</CheckLabel>
          <TrashIcon />
          <DeleteIcon />
          <CameraIcon />
          <FloppyIcon />
          <FolderIcon />
          <RefreshIcon />
          <DollarIcon />
          <EuroIcon />
          <GearIcon />
          <CalendarIcon />
        </Toolbar>

        <MainPanel>
          <PriceChart />
          <NavRow>
            <NavButton $width={22}>&lt;&lt;</NavButton>
            <NavButton $width={19}>&lt;</NavButton>
            <TickStrip>
              {TICKS.map(([label, x]) => (
                <Tick key={`${label}-${x}`} style={{ left: x - 71 }}>{label}</Tick>
              ))}
            </TickStrip>
            <NavButton $width={19}>&gt;</NavButton>
            <NavButton $width={22}>&gt;&gt;</NavButton>
          </NavRow>
        </MainPanel>

        <ChartPanel $height={99} $gap={4}>
          <SubChart
            top={467}
            title={{ text: "Histgrama MACD", y: 481.5 }}
            labels={[["12,8", 481.5], ["0", 528], ["-8,02", 564.5]]}
          >
            <MacdBars />
          </SubChart>
          <Legend>
            Macd<br />Forest<br />26,12,26
            <LegendValue $mt={2}>2,8</LegendValue>
          </Legend>
        </ChartPanel>

        <ChartPanel $height={99} $gap={4}>
          <SubChart
            top={570}
            title={{ text: "Indice Calidad Vela", y: 585 }}
            labels={[["10", 585], ["0", 620], ["-10", 667.5]]}
          >
            <IcvBars />
            <polyline points={toPoints(icvLine)} fill="none" stroke={GREEN} strokeWidth="2" />
          </SubChart>
          <Legend>
            ICV<br />5, 3, 1
            <LegendValue $mt={6}>2,03</LegendValue>
            <LegendValue $mt={0}>-1</LegendValue>
          </Legend>
        </ChartPanel>

        <ChartPanel $height={99} $gap={0}>
          <SubChart
            top={673}
            title={{ text: "Full Estocastico", y: 687.5 }}
            labels={[["100", 687.5], ["60", 713], ["40", 732], ["0", 771]]}
          >
            <line x1="70" x2="895" y1="713.5" y2="713.5" stroke="#e01010" strokeDasharray="3 2" />
            <line x1="70" x2="895" y1="732.5" y2="732.5" stroke="#1a7a00" strokeDasharray="3 2" />
            <polyline points={toPoints(estGray)} fill="none" stroke="#c8c8c8" strokeWidth="2" strokeDasharray="6 3" />
            <polyline points={toPoints(estGreen)} fill="none" stroke={GREEN} strokeWidth="2" />
            <polyline points={toPoints(estPurple)} fill="none" stroke="#3a2a8f" strokeWidth="2" />
            <polyline points={toPoints(estGreenEnd)} fill="none" stroke={GREEN} strokeWidth="2" />
          </SubChart>
          <Legend>
            EST. %<br />FULL<br />(28,3,6)
          </Legend>
        </ChartPanel>
      </LeftColumn>

      <Rail>
        <RadioDot $mt={16} />
        {railTop.map((item, i) => (
          <RailButton key={i} $mt={item.mt}>{item.glyph}</RailButton>
        ))}
        <IndicatorRail radioMt={37} gaps={[7, 4, 6]} />
        <IndicatorRail radioMt={11} on gaps={[8, 2, 3]} />
        <IndicatorRail radioMt={11} gaps={[7, 3, 3]} />
      </Rail>
    </Workspace>

    <StatusBar>
      <StockName>Goldman Sachs (GS)</StockName>
      <ConfigPath>/Users/mserra/Library/CloudStorage/Dropbox/WorkDB/DatosBolsa/Configs/Config.DEFAULT.xml</ConfigPath>
      <OffBadge>OFF</OffBadge>
    </StatusBar>
  </Page>
);

export default App;
